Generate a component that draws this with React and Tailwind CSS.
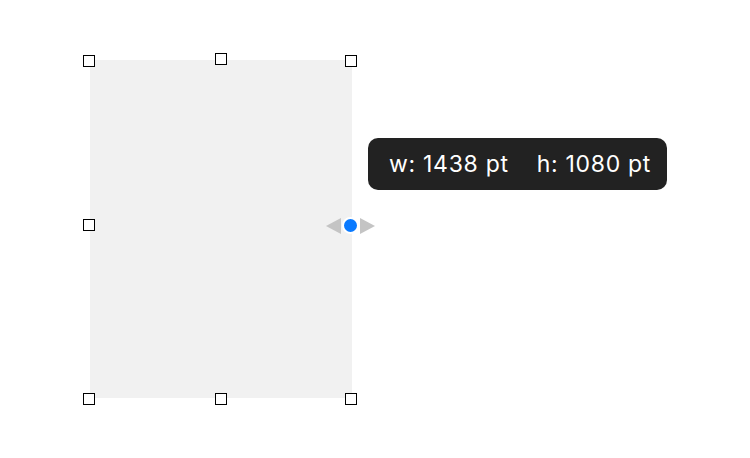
import React from 'react';

const Handle = ({ x, y }) => (
	<div
		className="absolute w-3 h-3 bg-white border-[1.4px] border-black"
		style={{ left: x - 6, top: y - 6 }}
	/>
);

const HANDLES = [
	[89, 61], [221, 59], [351, 61],
	[89, 225],
	[89, 399], [221, 399], [351, 399],
];

export default function App() {
	return (
		<div className="relative w-[750px] h-[458px] bg-white overflow-hidden" style={{ fontFamily: 'Inter, "Noto Sans", sans-serif' }}>
			{/* selected shape */}
			<div className="absolute left-[90px] top-[60px] w-[262px] h-[338px] bg-[#f1f1f1]" />

			{HANDLES.map(([x, y], i) => <Handle key={i} x={x} y={y} />)}

			{/* resize knob */}
			<div className="absolute left-[326px] top-[217px] flex items-center">
				<div className="w-0 h-0 border-y-[8px] border-y-transparent border-r-[15px] border-r-[#c4c4c4]" />
				<div className="w-[17px] h-[17px] rounded-full bg-[#0a7aff] border-2 border-white mx-[1px]" />
				<div className="w-0 h-0 border-y-[8px] border-y-transparent border-l-[15px] border-l-[#c4c4c4]" />
			</div>

			{/* size tooltip */}
			<div className="absolute left-[368px] top-[138px] w-[299px] h-[52px] rounded-[10px] bg-[#222222] text-white text-[23px] flex items-center pl-[21px] gap-[28px] tracking-[0.7px]">
				<span>w: 1438 pt</span>
				<span>h: 1080 pt</span>
			</div>
		</div>
	);
}
